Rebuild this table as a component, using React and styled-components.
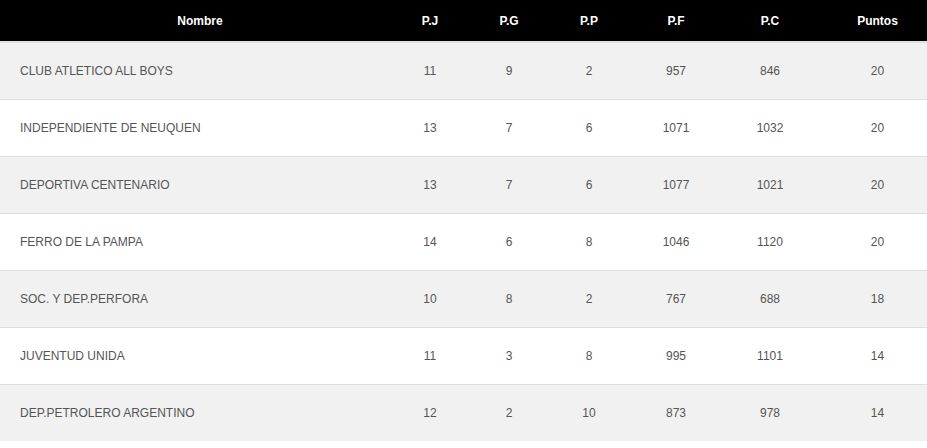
import styled, { createGlobalStyle } from "styled-components";

const GlobalStyle = createGlobalStyle`
  body {
    margin: 0;
    background: #fff;
    font-family: "Liberation Sans", Arial, sans-serif;
  }
`;

const columns = "380px 80px 78px 82px 92px 96px 119px";

const Table = styled.div`
  width: 927px;
`;

const HeadRow = styled.div`
  display: grid;
  grid-template-columns: ${columns};
  height: 41px;
  align-items: center;
  background: #000;
  border-bottom: 1px solid #dfe2e6;
`;

const HeadCell = styled.div`
  padding-left: 20px;
  text-align: center;
  color: #fff;
  font-size: 12px;
  font-weight: 700;
`;

const Row = styled.div`
  display: grid;
  grid-template-columns: ${columns};
  height: 56px;
  align-items: center;
  border-top: 1px solid #dedede;
  background: ${(p) => (p.$odd ? "#f1f1f1" : "#fff")};
`;

const Cell = styled.div`
  padding-left: 20px;
  text-align: ${(p) => (p.$left ? "left" : "center")};
  color: #555;
  font-size: 12px;
`;

const heads = ["Nombre", "P.J", "P.G", "P.P", "P.F", "P.C", "Puntos"];

const teams = [
  ["CLUB ATLETICO ALL BOYS", 11, 9, 2, 957, 846, 20],
  ["INDEPENDIENTE DE NEUQUEN", 13, 7, 6, 1071, 1032, 20],
  ["DEPORTIVA CENTENARIO", 13, 7, 6, 1077, 1021, 20],
  ["FERRO DE LA PAMPA", 14, 6, 8, 1046, 1120, 20],
  ["SOC. Y DEP.PERFORA", 10, 8, 2, 767, 688, 18],
  ["JUVENTUD UNIDA", 11, 3, 8, 995, 1101, 14],
  ["DEP.PETROLERO ARGENTINO", 12, 2, 10, 873, 978, 14],
];

export default function App() {
  return (
    <>
      <GlobalStyle />
      <Table>
        <HeadRow>
          {heads.map((h) => (
            <HeadCell key={h}>{h}</HeadCell>
          ))}
        </HeadRow>
        {teams.map((t, i) => (
          <Row key={t[0]} $odd={i % 2 === 0}>
            {t.map((v, j) => (
              <Cell key={j} $left={j === 0}>
                {v}
              </Cell>
            ))}
          </Row>
        ))}
      </Table>
    </>
  );
}
